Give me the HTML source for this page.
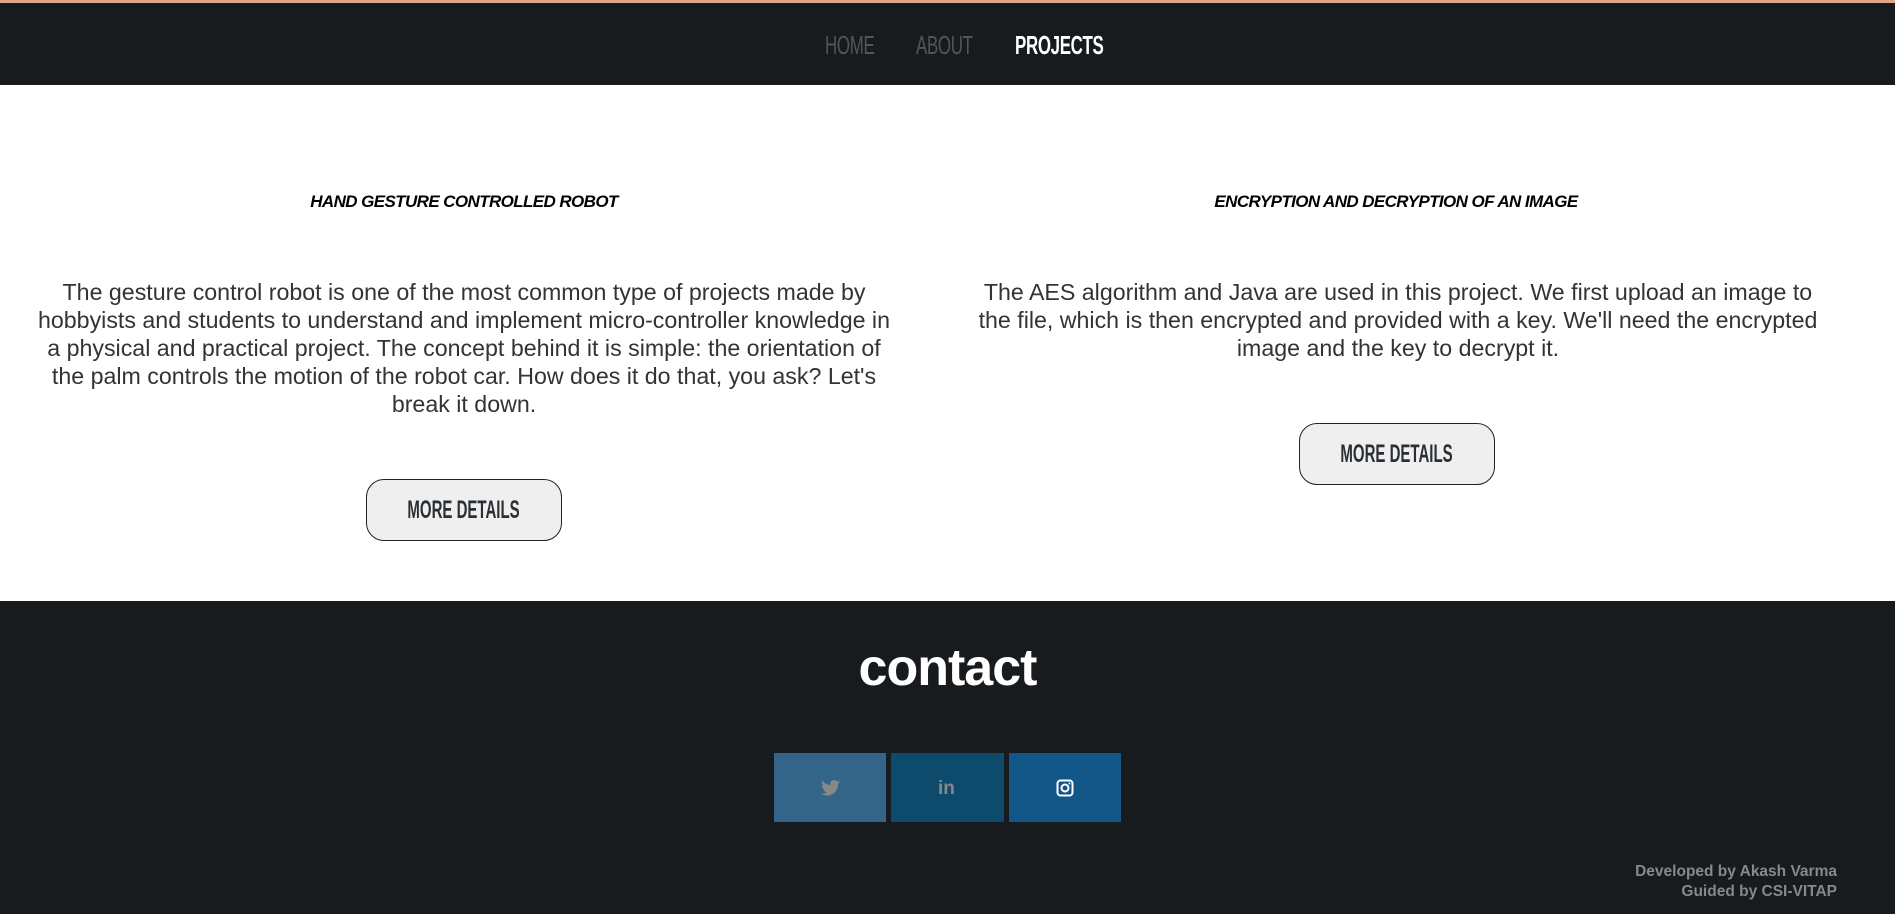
<!DOCTYPE html>
<html><head><meta charset="utf-8"><style>
*{margin:0;padding:0;box-sizing:border-box}
body{width:1895px;height:914px;overflow:hidden;background:#fff;font-family:"Liberation Sans",sans-serif;position:relative}
.top{position:absolute;left:0;top:0;width:1895px;height:3px;background:#e0a588}
.nav{position:absolute;left:0;top:3px;width:1895px;height:82px;background:#181b1e}
.nav span{position:absolute;top:27px;font-family:"Liberation Sans Narrow","Liberation Sans",sans-serif;font-size:26px;letter-spacing:-0.5px;color:#4f565c;transform:scaleX(.65);transform-origin:left}
h3{position:absolute;font-family:"Liberation Sans",sans-serif;font-style:italic;font-weight:bold;font-size:17px;text-transform:uppercase;color:#000;text-align:center;letter-spacing:-0.6px}
p{position:absolute;font-size:23.2px;line-height:28px;color:#333;text-align:center}
.btn{position:absolute;width:196px;height:62px;border:1.5px solid #222;border-radius:18px;background:#efefef;color:#2a2f35;text-align:center;line-height:60px}
.btn span{display:inline-block;font-size:25px;font-weight:bold;transform:scaleX(.6)}
.foot{position:absolute;left:0;top:601px;width:1895px;height:313px;background:#181b1e}
.contact{position:absolute;left:0;width:1895px;top:638px;text-align:center;color:#fff;font-size:52px;font-weight:bold;font-family:"Liberation Sans",sans-serif;letter-spacing:-1px}
.sq{position:absolute;top:753px;width:112px;height:69px}
.cred{position:absolute;right:58px;top:862px;text-align:right;color:#888;font-size:15.5px;font-weight:bold;line-height:20px}
</style></head><body>
<div class="top"></div>
<div class="nav">
<span style="left:825px">HOME</span>
<span style="left:916px">ABOUT</span>
<span style="left:1015px;color:#fff;font-weight:bold">PROJECTS</span>
</div>
<h3 style="left:164px;width:600px;top:192px">Hand gesture controlled robot</h3>
<h3 style="left:1096px;width:600px;top:192px">Encryption and Decryption of an Image</h3>
<p style="left:4px;width:920px;top:278px">The gesture control robot is one of the most common type of projects made by<br>hobbyists and students to understand and implement micro-controller knowledge in<br>a physical and practical project. The concept behind it is simple: the orientation of<br>the palm controls the motion of the robot car. How does it do that, you ask? Let's<br>break it down.</p>
<p style="left:968px;width:860px;top:278px">The AES algorithm and Java are used in this project. We first upload an image to the file, which is then encrypted and provided with a key. We'll need the encrypted image and the key to decrypt it.</p>
<div class="btn" style="left:366px;top:479px"><span>MORE DETAILS</span></div>
<div class="btn" style="left:1299px;top:423px"><span>MORE DETAILS</span></div>
<div class="foot"></div>
<div class="contact">contact</div>
<div class="sq" style="left:774px;background:#336588">
<svg style="position:absolute;left:47px;top:27px" width="19" height="16" viewBox="0 0 24 20"><path fill="#888" d="M24 2.4a10 10 0 0 1-2.8.8A5 5 0 0 0 23.3.4a10 10 0 0 1-3.1 1.2A4.9 4.9 0 0 0 11.8 6 14 14 0 0 1 1.7.9a4.9 4.9 0 0 0 1.5 6.6A4.9 4.9 0 0 1 1 6.9a4.9 4.9 0 0 0 3.9 4.8 5 5 0 0 1-2.2.1 4.9 4.9 0 0 0 4.6 3.4A9.9 9.9 0 0 1 0 17.3 14 14 0 0 0 7.5 19.5c9 0 14-7.5 14-14v-.6A10 10 0 0 0 24 2.4z"/></svg></div>
<div class="sq" style="left:891px;background:#0d4a6b;width:113px">
<div style="position:absolute;left:47px;top:25px;color:#888;font-weight:bold;font-size:19px">in</div></div>
<div class="sq" style="left:1009px;background:#125688">
<svg style="position:absolute;left:47px;top:26px" width="18" height="18" viewBox="0 0 18 18"><rect x="1.5" y="1.5" width="15" height="15" rx="3" fill="none" stroke="#fff" stroke-width="2"/><circle cx="9" cy="9" r="3.5" fill="none" stroke="#fff" stroke-width="2"/><circle cx="13.5" cy="4.5" r="1" fill="#fff"/></svg></div>
<div class="cred">Developed by Akash Varma<br>Guided by CSI-VITAP</div>
</body></html>
